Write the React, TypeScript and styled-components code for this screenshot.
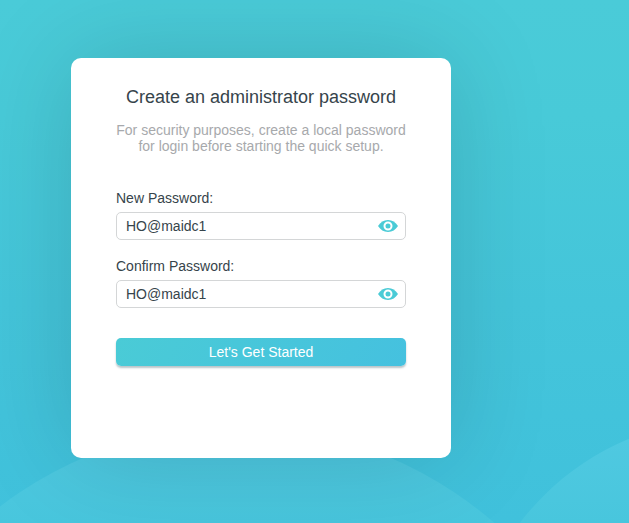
import React, { useState } from "react";
import styled, { createGlobalStyle } from "styled-components";

const GlobalStyle = createGlobalStyle`
  * { box-sizing: border-box; }
  body {
    margin: 0;
    overflow: hidden;
    font-family: "Liberation Sans", Arial, sans-serif;
  }
`;

const Page = styled.main`
  position: relative;
  isolation: isolate;
  width: 100%;
  height: 523px;
  padding: 58px 0 0 71px;
  overflow: hidden;
  background: linear-gradient(180deg, #4acbd8 0%, #48cad8 22%, #44c5da 58%, #40c1dc 100%);
`;

const Hills = styled.svg`
  position: absolute;
  inset: 0;
  z-index: -1;
`;

const Card = styled.section`
  display: flex;
  flex-direction: column;
  width: 380px;
  height: 400px;
  padding: 28px 45px 0;
  background: #fff;
  border-radius: 10px;
  box-shadow: 0 0 100px rgba(0, 0, 0, 0.15);
`;

const Title = styled.h1`
  margin: 0;
  font-size: 18px;
  line-height: 22px;
  font-weight: 400;
  color: #36444b;
  text-align: center;
  white-space: nowrap;
`;

const Note = styled.p`
  margin: 14px -5px 0;
  font-size: 14px;
  line-height: 16px;
  color: #a7a9ac;
  text-align: center;
`;

const Form = styled.form`
  display: flex;
  flex-direction: column;
  margin-top: 36px;
`;

const Field = styled.div`
  display: flex;
  flex-direction: column;
  gap: 6px;
  margin-bottom: 18px;
`;

const Label = styled.label`
  font-size: 14px;
  line-height: 16px;
  color: #36444b;
`;

const InputBox = styled.div`
  display: flex;
  align-items: center;
  height: 28px;
  padding: 0 7px 0 9px;
  border: 1px solid #d4d6d7;
  border-radius: 5px;
`;

const Input = styled.input`
  flex: 1;
  min-width: 0;
  height: 24px;
  padding: 0;
  border: 0;
  outline: 0;
  background: transparent;
  font: 14px "Liberation Sans", Arial, sans-serif;
  color: #36444b;
`;

const EyeButton = styled.button`
  display: flex;
  padding: 0;
  border: 0;
  background: none;
  cursor: pointer;
`;

const Submit = styled.button`
  height: 28px;
  margin-top: 12px;
  padding: 0;
  border: 0;
  border-radius: 5px;
  background: linear-gradient(120deg, #4acbd6, #45c1df);
  box-shadow: 0 2px 2px rgba(54, 90, 100, 0.35);
  font: 14px "Liberation Sans", Arial, sans-serif;
  color: #fff;
  cursor: pointer;
`;

const Eye = () => (
  <svg width="20" height="12" viewBox="0 0 20 12">
    <path d="M0 6C2.600 2.200 5.600 0 10 0s7.400 2.200 10 6c-2.600 3.800-5.600 6-10 6S2.600 9.800 0 6Z" fill="#4acbd6" />
    <circle cx="10" cy="6" r="3.500" fill="#4acbd6" stroke="#fff" strokeWidth="2" />
  </svg>
);

function PasswordField({ id, label }: { id: string; label: string }) {
  const [value, setValue] = useState("HO@maidc1");
  const [visible, setVisible] = useState(true);
  return (
    <Field>
      <Label htmlFor={id}>{label}</Label>
      <InputBox>
        <Input
          id={id}
          type={visible ? "text" : "password"}
          value={value}
          spellCheck={false}
          onChange={(e) => setValue(e.target.value)}
        />
        <EyeButton type="button" aria-label="Toggle visibility" onClick={() => setVisible(!visible)}>
          <Eye />
        </EyeButton>
      </InputBox>
    </Field>
  );
}

export default function App() {
  return (
    <>
      <GlobalStyle />
      <Page>
        <Hills width="629" height="523" viewBox="0 0 629 523" aria-hidden="true">
          <defs>
            <linearGradient id="hill" gradientUnits="userSpaceOnUse" x1="0" y1="430" x2="0" y2="523">
              <stop offset="0" stopColor="#50c9e1" />
              <stop offset="1" stopColor="#48c6dd" />
            </linearGradient>
          </defs>
          <circle cx="237" cy="818" r="391.500" fill="url(#hill)" />
          <circle cx="732" cy="685" r="267" fill="url(#hill)" />
        </Hills>
        <Card>
          <Title>Create an administrator password</Title>
          <Note>
            For security purposes, create a local password
            <br />
            for login before starting the quick setup.
          </Note>
          <Form onSubmit={(e) => e.preventDefault()}>
            <PasswordField id="new-password" label="New Password:" />
            <PasswordField id="confirm-password" label="Confirm Password:" />
            <Submit type="submit">Let's Get Started</Submit>
          </Form>
        </Card>
      </Page>
    </>
  );
}
